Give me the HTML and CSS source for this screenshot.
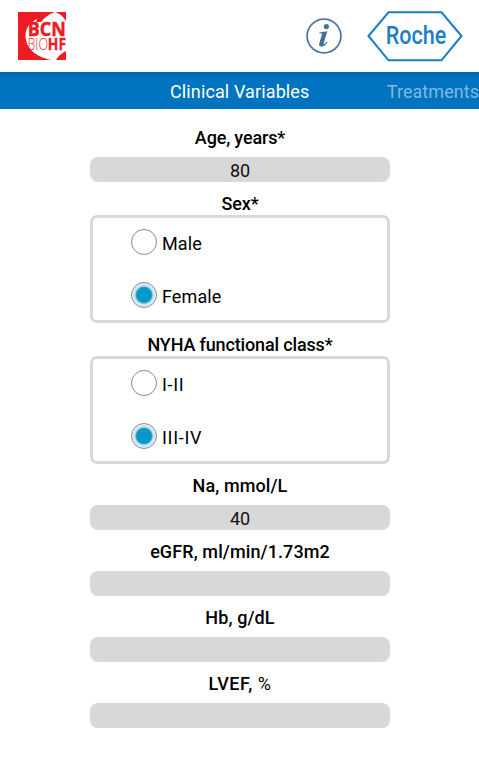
FILE: index.html
```html
<!DOCTYPE html>
<html lang="en">
<head>
  <meta charset="utf-8">
  <title>BCN Bio-HF</title>
  <link rel="stylesheet" href="styles.css">
</head>
<body>
  <header class="header">
    <svg class="logo-bcn" width="48" height="48" viewBox="0 0 48 48">
      <rect width="48" height="48" fill="#ed1c24"/>
      <path d="M48 9C45 4 41 1 37 0C31 2 26 6 23 10H18L19 7C10 11 6 19 8 28C10 39 20 45 33 48H38C40 44 44 41 48 39Z" fill="#fff"/>
      <text class="bcn" x="9.800" y="24.300" textLength="38" lengthAdjust="spacingAndGlyphs">BCN</text>
      <text class="bio" x="9.500" y="38" textLength="20.500" lengthAdjust="spacingAndGlyphs">BIO</text>
      <text class="hf" x="29.800" y="38" textLength="18.200" lengthAdjust="spacingAndGlyphs">HF</text>
    </svg>
    <svg class="info" width="36" height="36" viewBox="0 0 36 36">
      <circle cx="18" cy="18" r="16.900" fill="none" stroke="#4d76a5" stroke-width="1.700"/>
      <circle cx="20.400" cy="8.600" r="2.600" fill="#44709f"/>
      <path d="M13.300 14.500L21.300 13.300L17.700 25.500C17.400 26.700 18.300 26.600 20.800 23.600L21.500 24.200C19.300 27.400 17.400 28.600 15.300 28.600C13.400 28.600 12.700 27.300 13.300 25.300L15.900 16.600C16.200 15.500 15.500 15.300 13.200 15.300Z" fill="#44709f"/>
    </svg>
    <svg class="logo-roche" width="96" height="52" viewBox="0 0 96 52">
      <path d="M21.500 2.200H74.500L94.500 26L74.500 50.300H21.500L1.500 26Z" fill="none" stroke="#1b7fc8" stroke-width="2.100"/>
      <text x="18.700" y="34" textLength="60.500" lengthAdjust="spacingAndGlyphs">Roche</text>
    </svg>
  </header>

  <nav class="tabs">
    <a class="tab active">Clinical Variables</a>
    <a class="tab next">Treatments</a>
  </nav>

  <form class="form">
    <div class="field">
      <label class="label tight" for="age">Age, years*</label>
      <input class="input" id="age" type="text" value="80">
    </div>
    <div class="field">
      <span class="label tight">Sex*</span>
      <div class="group">
        <label class="option"><input type="radio" name="sex">Male</label>
        <label class="option"><input type="radio" name="sex" checked>Female</label>
      </div>
    </div>
    <div class="field">
      <span class="label tight">NYHA functional class*</span>
      <div class="group">
        <label class="option roman"><input type="radio" name="nyha">I-II</label>
        <label class="option roman"><input type="radio" name="nyha" checked>III-IV</label>
      </div>
    </div>
    <div class="field">
      <label class="label" for="na">Na, mmol/L</label>
      <input class="input" id="na" type="text" value="40">
    </div>
    <div class="field">
      <label class="label" for="egfr">eGFR, ml/min/1.73m2</label>
      <input class="input" id="egfr" type="text">
    </div>
    <div class="field">
      <label class="label" for="hb">Hb, g/dL</label>
      <input class="input" id="hb" type="text">
    </div>
    <div class="field">
      <label class="label wide" for="lvef">LVEF, <span class="unit">%</span></label>
      <input class="input" id="lvef" type="text">
    </div>
  </form>
</body>
</html>
```
FILE: styles.css
```css
*, *:before, *:after { box-sizing: border-box; }
body { margin: 0; background: #fff; color: #000; font-family: Roboto, sans-serif; font-size: 18px; overflow: hidden; }

.header { display: flex; align-items: center; height: 72px; padding: 0 16px 0 18px; }
.info { margin-left: auto; }
.logo-bcn { overflow: visible; }
.logo-roche { margin-left: 25px; }
.logo-roche text { font: 500 26.5px Roboto, sans-serif; fill: #1b7fc8; }
.bcn { font: 700 19.5px "Open Sans", sans-serif; fill: #ed1c24; stroke: #ed1c24; stroke-width: 0.5px; }
.bio { font: 300 16.5px "Open Sans", sans-serif; fill: #ed1c24; }
.hf { font: 700 16.5px "Open Sans", sans-serif; fill: #ed1c24; stroke: #ed1c24; stroke-width: 0.3px; }

.tabs {
  display: grid;
  grid-template-columns: 1fr 139px 1fr;
  height: 37px;
  line-height: 39px;
  background: linear-gradient(#0065ab, #0073c0 6px);
  color: #fff;
  white-space: nowrap;
}
.tab.active { grid-column: 2; letter-spacing: 0.12px; }
.tab.next { justify-self: end; color: #80b9e0; letter-spacing: 0.05px; }

.form { width: 300px; margin: 18px auto 0; }
.field { margin-bottom: 11px; }
.label { display: block; padding-left: 1px; line-height: 22px; text-align: center; font-weight: 500; letter-spacing: 0.1px; }
.label.tight { letter-spacing: -0.15px; }
.label.wide { letter-spacing: 0.5px; }
.unit { font-weight: 400; }
.input {
  display: block;
  width: 100%;
  height: 25px;
  margin-top: 8px;
  padding: 2px 0 0 1px;
  border: 0;
  border-radius: 8px;
  background: #d8d8d8;
  color: #111;
  font: 18px Roboto, sans-serif;
  text-align: center;
  outline: none;
}

.group { height: 108px; padding: 11px 0 0 38px; border: 3px solid #d8d8d8; border-radius: 7px; }
.option { display: flex; align-items: center; height: 26px; margin-bottom: 27px; line-height: 26px; padding-top: 3px; letter-spacing: 0.1px; }
.option.roman { letter-spacing: 0.7px; }
.option input {
  appearance: none;
  width: 26px;
  height: 26px;
  margin: -3px 5.5px 0 0;
  border: 1.5px solid #8b8b8b;
  border-radius: 50%;
}
.option input:checked { background: radial-gradient(circle, #0099cc 7px, #5b9fb9 8px, #b9e2f0 9px, #e4f5fa 12px); }
```
